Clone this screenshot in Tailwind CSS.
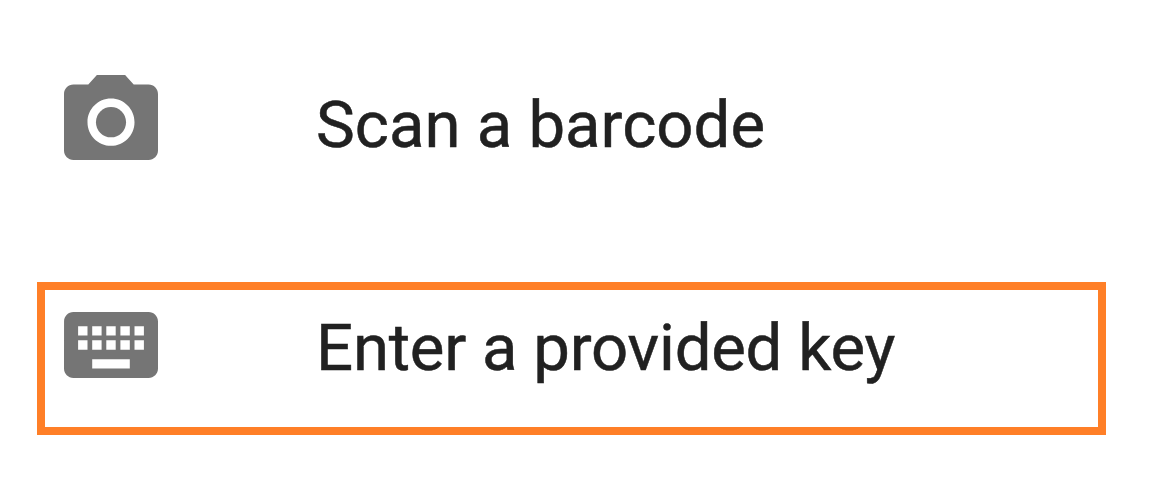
<!DOCTYPE html>
<html lang="en">
<head>
<meta charset="utf-8">
<title>Add account</title>
<script src="https://cdn.jsdelivr.net/npm/@tailwindcss/browser@4"></script>
</head>
<body class="h-screen overflow-hidden bg-white font-[Roboto,sans-serif] text-[#212121]">
<main class="flex flex-col pl-[37px] pt-[48px]">
  <button class="flex h-[153px] w-[1069px] items-start pl-[27px] pt-[27px] text-left">
    <svg class="h-[85px] w-[94px] shrink-0" viewBox="2 2 20 18" preserveAspectRatio="none" fill="#757575"><path fill-rule="evenodd" d="M9 2 7.17 4H4c-1.1 0-2 .9-2 2v12c0 1.1.9 2 2 2h16c1.1 0 2-.9 2-2V6c0-1.1-.9-2-2-2h-3.17L15 2H9zm3 15c-2.76 0-5-2.24-5-5s2.24-5 5-5 5 2.24 5 5-2.24 5-5 5z"/><circle cx="12" cy="12" r="3.2"/></svg>
    <span class="ml-[158px] mt-[11px] text-[65.3px] leading-[77px] whitespace-nowrap [-webkit-text-stroke:0.5px_#212121]">Scan a barcode</span>
  </button>
  <button class="mt-[81px] flex h-[153px] w-[1069px] items-start border-[8px] border-[#ff7f27] pl-[19px] pt-[19px] text-left">
    <svg class="mt-[3px] h-[66px] w-[94px] shrink-0" viewBox="2 5 20 14" preserveAspectRatio="none" fill="#757575"><path d="M20 5H4c-1.1 0-1.99.9-1.99 2L2 17c0 1.1.9 2 2 2h16c1.1 0 2-.9 2-2V7c0-1.1-.9-2-2-2zm-9 3h2v2h-2V8zm0 3h2v2h-2v-2zM8 8h2v2H8V8zm0 3h2v2H8v-2zm-1 2H5v-2h2v2zm0-3H5V8h2v2zm9 7H8v-2h8v2zm0-4h-2v-2h2v2zm0-3h-2V8h2v2zm3 3h-2v-2h2v2zm0-3h-2V8h2v2z"/></svg>
    <span class="ml-[158px] text-[65.3px] leading-[77px] tracking-[-0.23px] whitespace-nowrap [-webkit-text-stroke:0.5px_#212121]">Enter a provided key</span>
  </button>
</main>
</body>
</html>
